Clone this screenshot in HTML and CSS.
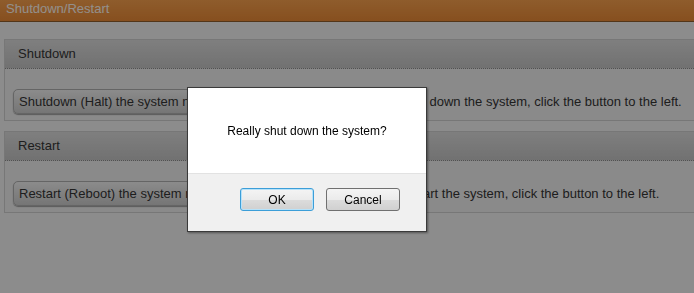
FILE: index.html
```html
<!DOCTYPE html>
<html lang="en">
<head>
  <meta charset="UTF-8">
  <title>Shutdown/Restart</title>
  <link rel="stylesheet" href="styles.css">
</head>
<body>
  <div class="topbar">Shutdown/Restart</div>

  <div class="content">
    <div class="panel">
      <div class="panel-head">Shutdown</div>
      <div class="panel-body">
        <button class="action">Shutdown (Halt) the system now</button>
        <span class="hint">To shut down the system, click the button to the left.</span>
      </div>
    </div>

    <div class="panel">
      <div class="panel-head">Restart</div>
      <div class="panel-body">
        <button class="action">Restart (Reboot) the system now</button>
        <span class="hint">To restart the system, click the button to the left.</span>
      </div>
    </div>
  </div>

  <!-- confirm dialog -->
  <div class="overlay"></div>
  <div class="dialog">
    <div class="dialog-msg">Really shut down the system?</div>
    <div class="dialog-foot">
      <button class="dlg-btn focus">OK</button>
      <button class="dlg-btn">Cancel</button>
    </div>
  </div>
</body>
</html>
```

FILE: styles.css
```css
/* General */
body {
  margin: 0;
  font-family: "Liberation Sans", Arial, sans-serif;
  font-size: 13px;
  background-color: #e9e9e9;
  color: #222;
  overflow: hidden;
}

/* Title bar */
.topbar {
  height: 21px;
  line-height: 17px;
  padding-left: 6px;
  background: linear-gradient(#ee9a4a, #e08434);
  border-bottom: 1px solid #8a5a2a;
  color: #f6efe8;
}

.content {
  padding: 17px 0 0 4px;
}

/* Panels */
.panel {
  border: 1px solid #c6c6c6;
  border-right: none;
  margin-bottom: 10px;
  background-color: #e6e6e6;
}

.panel-head {
  height: 28px;
  line-height: 28px;
  padding-left: 13px;
  background: linear-gradient(#d4d4d4, #bdbdbd);
  border-bottom: 1px dotted #888;
  color: #333;
}

.panel-body {
  display: flex;
  align-items: center;
  padding: 20px 0 6px 8px;
}

.action {
  width: 371px;
  height: 25px;
  padding: 0 5px;
  text-align: left;
  font-family: inherit;
  font-size: 13px;
  color: #333;
  background: linear-gradient(#e8e8e8, #c4c4c4);
  border: 1px solid #a8a8a8;
  border-radius: 5px;
  box-shadow: 0 1px 1px rgba(0, 0, 0, 0.35);
}

.hint {
  color: #333;
}

/* Modal */
.overlay {
  position: fixed;
  top: 0;
  left: 0;
  right: 0;
  bottom: 0;
  background-color: rgba(0, 0, 0, 0.4);
}

.dialog {
  position: absolute;
  left: 187px;
  top: 87px;
  width: 238px;
  border: 1px solid #3a3a3a;
  background-color: #fff;
  box-shadow: 1px 1px 2px rgba(0, 0, 0, 0.4);
  font-size: 12px;
  color: #000;
}

.dialog-msg {
  height: 85px;
  line-height: 86px;
  text-align: center;
  border-bottom: 1px solid #e2e2e2;
}

.dialog-foot {
  height: 57px;
  background-color: #f0f0f0;
  display: flex;
  justify-content: flex-end;
  gap: 12px;
  padding: 14px 26px 0 0;
  box-sizing: border-box;
}

.dlg-btn {
  width: 74px;
  height: 23px;
  font-family: inherit;
  font-size: 12px;
  color: #000;
  background: linear-gradient(#f4f4f4 0%, #ebebeb 50%, #dcdcdc 51%, #d0d0d0 100%);
  border: 1px solid #707070;
  border-radius: 3px;
  padding: 0;
}

.dlg-btn.focus {
  border-color: #3c9ed8;
  box-shadow: inset 0 0 0 1px #b6e2fa;
}
```
